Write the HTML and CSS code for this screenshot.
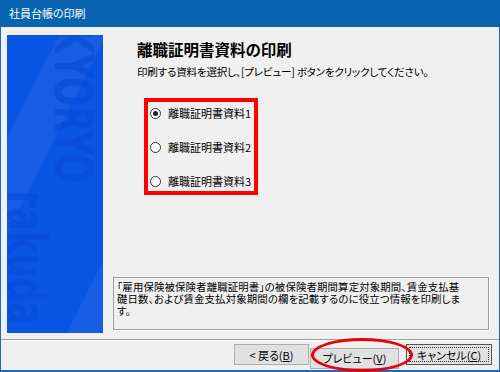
FILE: index.html
```html
<!DOCTYPE html>
<html lang="ja">
<head>
    <meta charset="UTF-8">
    <title>社員台帳の印刷</title>
    <link rel="stylesheet" href="styles.css">
</head>
<body>
    <div class="window">
        <div class="titlebar">社員台帳の印刷</div>
        <div class="main">
            <div class="banner">
                <svg width="96" height="298" viewBox="0 0 96 298">
                    <rect width="96" height="298" fill="#0b55e3"/>
                    <polygon points="52,0 96,0 96,6 0,198 0,104" fill="#2566e6" opacity="0.45"/>
                    <polygon points="96,226 96,298 60,298" fill="#2566e6" opacity="0.45"/>
                    <text class="logo" transform="translate(48,-8) rotate(90)" textLength="156" lengthAdjust="spacingAndGlyphs">KYORYO</text>
                    <text class="logo" transform="translate(1,156) rotate(90)" textLength="134" lengthAdjust="spacingAndGlyphs">rakuda</text>
                </svg>
            </div>
            <div class="content">
                <h1>離職証明書資料の印刷</h1>
                <p class="lead">印刷する資料を選択し、[プレビュー] ボタンをクリックしてください。</p>
                <div class="choices">
                    <label class="choice"><span class="radio checked"></span>離職証明書資料1</label>
                    <label class="choice"><span class="radio"></span>離職証明書資料2</label>
                    <label class="choice"><span class="radio"></span>離職証明書資料3</label>
                </div>
                <div class="note">「雇用保険被保険者離職証明書」の被保険者期間算定対象期間、賃金支払基<br>礎日数、および賃金支払対象期間の欄を記載するのに役立つ情報を印刷しま<br>す。</div>
            </div>
        </div>
        <div class="footer">
            <button class="btn back">&lt; 戻る(<u>B</u>)</button>
            <div class="highlight">
                <button class="btn preview">プレビュー(<u>V</u>)</button>
                <span class="ring"></span>
            </div>
            <button class="btn cancel"><span class="focus">キャンセル(<u>C</u>)</span></button>
        </div>
    </div>
</body>
</html>
```

FILE: styles.css
```css
* {
    box-sizing: border-box;
}

body {
    margin: 0;
    font-family: "Noto Sans CJK JP", "Noto Sans", sans-serif;
    font-feature-settings: "palt";
    color: #000;
    background: #f0f0f0;
}

.window {
    width: 500px;
    height: 372px;
    background: #f0f0f0;
    border-left: 1px solid #1a6bbf;
    border-right: 1px solid #1a6bbf;
    border-bottom: 2px solid #1a6bbf;
    display: flex;
    flex-direction: column;
}

.titlebar {
    height: 27px;
    margin: 0 -1px;
    padding-left: 9px;
    background: #0864b0;
    color: #fff;
    font-size: 11px;
    line-height: 27px;
}

.main {
    display: flex;
    gap: 10px;
    padding: 8px 10px 6px 6px;
    border-bottom: 1px solid #a0a0a0;
    box-shadow: 0 1px 0 #fff;
}

.banner {
    width: 96px;
    height: 298px;
    flex: none;
}

.banner svg {
    display: block;
}

.logo {
    font-family: "Liberation Sans Narrow", "DejaVu Sans Condensed", sans-serif;
    font-weight: bold;
    font-size: 54px;
    fill: #094dd8;
    opacity: 0.7;
}

.content {
    flex: 1;
    height: 298px;
    display: flex;
    flex-direction: column;
}

h1 {
    margin: 4px 0 0 24px;
    font-size: 15.5px;
    font-weight: bold;
    line-height: 20px;
}

.lead {
    margin: 5px 0 0 24px;
    font-size: 10.6px;
    letter-spacing: -0.25px;
    line-height: 16px;
}

.choices {
    width: 114px;
    height: 97px;
    margin: 18px 0 0 31px;
    border: 4px solid #f00;
    padding: 1px 0 0 2px;
    display: flex;
    flex-direction: column;
    gap: 14px;
}

.choice {
    height: 20px;
    display: flex;
    align-items: center;
    gap: 7px;
    font-size: 11px;
}

.radio {
    width: 11px;
    height: 11px;
    border: 1px solid #333;
    border-radius: 50%;
    background: #fff;
    display: flex;
    align-items: center;
    justify-content: center;
}

.radio.checked::after {
    content: "";
    width: 5px;
    height: 5px;
    border-radius: 50%;
    background: #222;
}

.note {
    margin-top: auto;
    margin-bottom: 3px;
    height: 53px;
    padding: 3px 0 0 3px;
    border: 1px solid #a0a0a0;
    box-shadow: 1px 1px 0 #fff;
    font-size: 10.4px;
    letter-spacing: 0.15px;
    line-height: 12px;
    white-space: nowrap;
}

.footer {
    display: flex;
    justify-content: flex-end;
    padding: 4px 7px 0 0;
}

.btn {
    height: 21px;
    padding: 0;
    background: #e1e1e1;
    border: 1px solid #adadad;
    font-family: inherit;
    font-feature-settings: "palt";
    font-size: 11px;
    color: #000;
}

.back {
    width: 75px;
}

.highlight {
    position: relative;
    margin-left: 1px;
}

.preview {
    width: 89px;
}

.ring {
    position: absolute;
    left: 1px;
    top: -6px;
    width: 102px;
    height: 34px;
    border: 3px solid #e8000b;
    border-radius: 50%;
}

.cancel {
    width: 86px;
    margin-left: 7px;
    border-color: #555;
    padding: 2px;
}

.focus {
    display: flex;
    align-items: center;
    justify-content: center;
    height: 100%;
    border: 1px dotted #333;
}
```
